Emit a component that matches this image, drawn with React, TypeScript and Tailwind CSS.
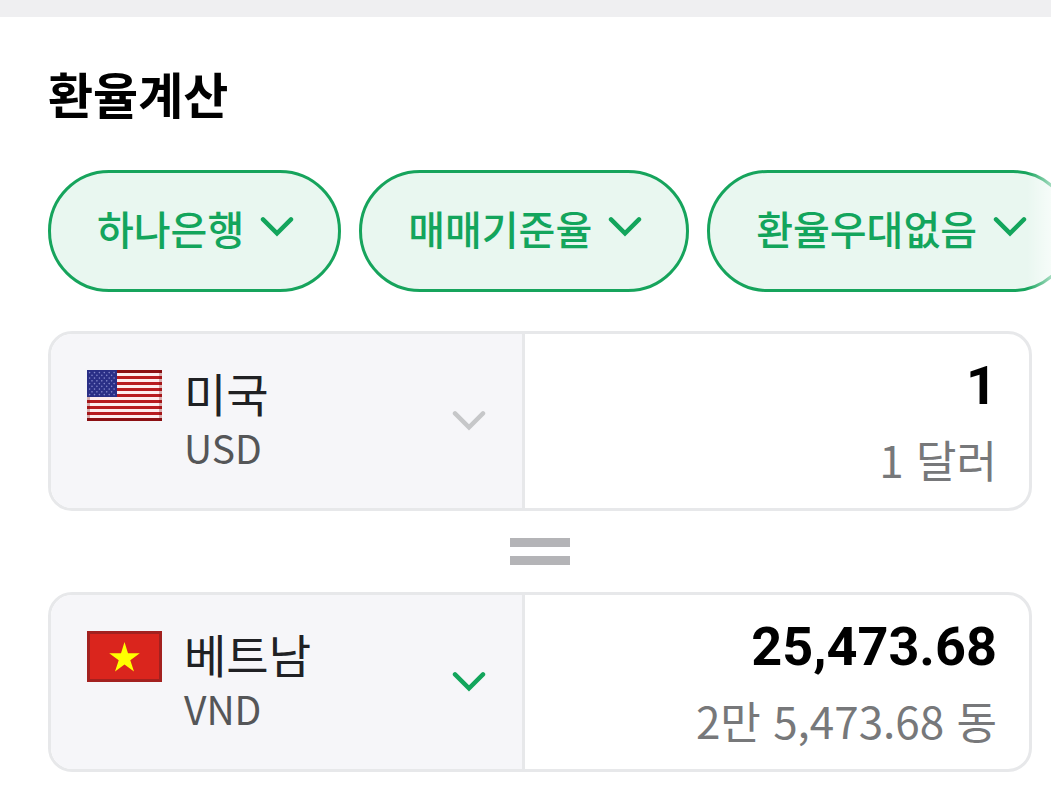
import { useState } from "react";

function Chevron({ className }: { className: string }) {
  return (
    <svg
      viewBox="0 0 34 22"
      fill="none"
      stroke="currentColor"
      strokeWidth="4.4"
      strokeLinecap="round"
      aria-hidden="true"
      className={className}
    >
      <path d="M3 3.4 L17 17.4 L31 3.4" />
    </svg>
  );
}

const STARS = Array.from({ length: 9 }, (_, row) =>
  Array.from({ length: row % 2 ? 5 : 6 }, (_, col) => ({
    x: (row % 2 ? 5 : 2.6) + col * 4.9,
    y: 2.6 + row * 2.75,
  })),
).flat();

function UsFlag() {
  return (
    <svg viewBox="0 0 75 51" aria-hidden="true" className="h-[51px] w-[75px] shrink-0">
      <rect width="75" height="51" fill="#fdeeee" />
      {[0, 6, 12, 18, 24, 30, 36, 42, 48].map((y) => (
        <rect key={y} y={y} width="75" height="3" fill="#b81c1f" />
      ))}
      <rect width="30" height="27" fill="#2a2f86" />
      {STARS.map((s, i) => (
        <circle key={i} cx={s.x} cy={s.y} r="0.8" fill="#8286ca" />
      ))}
      <path d="M30 0H75V3H30zM0 48H75V51H0z" fill="#8c1013" />
      <path d="M0 27H3V51H0zM72 0H75V51H72z" fill="#7a0c10" fillOpacity="0.28" />
    </svg>
  );
}

function VnFlag() {
  return (
    <svg viewBox="0 0 75 51" aria-hidden="true" className="h-[51px] w-[75px] shrink-0">
      <rect width="75" height="51" fill="#a3211f" />
      <rect x="3" y="3" width="69" height="45" fill="#da251d" />
      <path
        d="M37.5 11 L41 22.2 L52.8 22.2 L43.3 29.2 L47 40.5 L37.5 33.6 L28 40.5 L31.7 29.2 L22.2 22.2 L34 22.2 Z"
        fill="#ffff00"
      />
    </svg>
  );
}

function ChipSelect({ label, options }: { label: string; options: string[] }) {
  return (
    <div className="relative shrink-0">
      <select
        aria-label={label}
        className="block h-[122px] cursor-pointer appearance-none rounded-full border-3 border-[#16a45c] bg-[#e9f7f0] pr-[94px] pb-[7px] pl-[46px] text-[40px] font-medium text-[#13a55c] [field-sizing:content]"
      >
        {options.map((o) => (
          <option key={o}>{o}</option>
        ))}
      </select>
      <Chevron className="pointer-events-none absolute top-[46px] right-[47px] h-[22px] w-[34px] text-[#13a55c]" />
    </div>
  );
}

type CurrencyProps = {
  flag: React.ReactNode;
  country: string;
  code: string;
  initial: string;
  reading: string;
  chevron: string;
};

function CurrencyCard({ flag, country, code, initial, reading, chevron }: CurrencyProps) {
  const [amount, setAmount] = useState(initial);
  const id = `amount-${code}`;
  return (
    <div className="flex overflow-hidden rounded-3xl border-3 border-[#e7e8ea] bg-white">
      <button
        type="button"
        aria-haspopup="listbox"
        className="flex w-[48.5%] cursor-pointer items-center border-r-3 border-[#e7e8ea] bg-[#f6f6f9] px-9 py-8 text-left"
      >
        <span className="flex grow items-start gap-[22px]">
          <span className="pt-1">{flag}</span>
          <span className="flex flex-col">
            <span className="text-[46px] leading-[52px] text-[#202124]">{country}</span>
            <span className="text-[39px] leading-[58px] text-[#555658]">{code}</span>
          </span>
        </span>
        <Chevron className={chevron} />
      </button>
      <div className="flex min-w-0 flex-1 flex-col px-8 pt-[15px] pb-[11px] text-right">
        <input
          id={id}
          aria-label={`${country} ${code}`}
          inputMode="decimal"
          value={amount}
          onChange={(e) => setAmount(e.target.value)}
          className="h-[72px] w-full bg-transparent text-right font-['Roboto',sans-serif] text-[54px] font-bold text-black outline-none"
        />
        <label htmlFor={id} className="text-[44px] leading-[76px] text-[#77787a]">
          {reading}
        </label>
      </div>
    </div>
  );
}

export default function App() {
  return (
    <main lang="ko" className="overflow-hidden border-t-17 border-[#efeff1] bg-white pb-6 font-['Noto_Sans_CJK_KR',sans-serif]">
      <h1 className="mt-11 pl-12 text-[49px] leading-[64px] font-bold text-black">환율계산</h1>
      <div className="relative mt-[45px]">
        <div className="flex gap-[18px] overflow-hidden pl-12">
          <ChipSelect label="은행" options={["하나은행"]} />
          <ChipSelect label="기준" options={["매매기준율"]} />
          <ChipSelect label="우대율" options={["환율우대없음"]} />
        </div>
        <div className="pointer-events-none absolute inset-y-0 right-0 w-6 bg-linear-to-r from-white/0 to-white/60" />
      </div>
      <div className="mt-[39px] mr-[19px] ml-12 flex flex-col">
        <CurrencyCard
          flag={<UsFlag />}
          country="미국"
          code="USD"
          initial="1"
          reading="1 달러"
          chevron="h-[22px] w-[34px] shrink-0 text-[#c6c7c9]"
        />
        <div aria-hidden="true" className="my-[27px] flex flex-col gap-[9px] self-center">
          <div className="h-[9px] w-15 bg-[#b4b4b7]" />
          <div className="h-[9px] w-15 bg-[#b4b4b7]" />
        </div>
        <CurrencyCard
          flag={<VnFlag />}
          country="베트남"
          code="VND"
          initial="25,473.68"
          reading="2만 5,473.68 동"
          chevron="h-[22px] w-[34px] shrink-0 text-[#13a55c]"
        />
      </div>
    </main>
  );
}
